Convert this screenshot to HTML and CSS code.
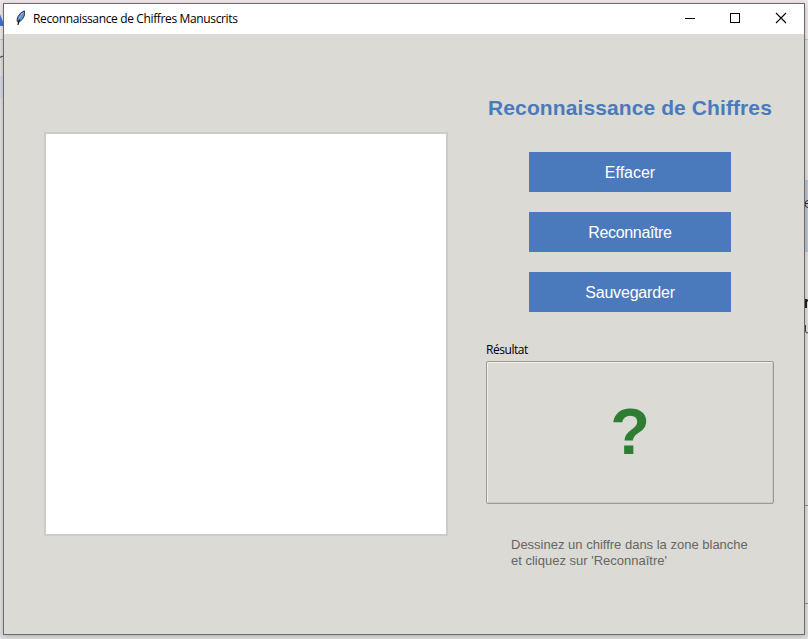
FILE: index.html
```html
<!DOCTYPE html>
<html lang="fr">
<head>
<meta charset="utf-8">
<title>Reconnaissance de Chiffres Manuscrits</title>
<link rel="stylesheet" href="styles.css">
</head>
<body>
<div class="backdrop" aria-hidden="true">
  <svg width="808" height="639" viewBox="0 0 808 639">
    <rect width="808" height="39" fill="#f0e8e8"/>
    <path d="M0 39.5h808" stroke="#c4c2c4"/>
    <path d="M0 14l3 8v4H0z" fill="#3f6fd0"/>
    <path d="M0 57.500q2-1.500 3-1" stroke="#555" stroke-width="1.300" fill="none"/>
    <rect y="76" width="3" height="22" fill="#d3d6e0"/>
    <rect x="805" y="180" width="3" height="72" fill="#bfc4d2"/>
    <path d="M805 505.500h3M805 603.500h3" stroke="#929292"/>
    <path d="M808 200.500q-3 0-3 3.500t3 3.500M805 203.500h3" stroke="#333" fill="none"/>
    <path d="M806 299v9M806 300.500h2" stroke="#222" stroke-width="2"/>
    <path d="M805.500 325v6q0 2 2.500 2" stroke="#444" fill="none"/>
  </svg>
</div>
<div class="window">
  <header class="titlebar">
    <svg class="feather" width="12" height="16" viewBox="0 0 12 16">
      <path d="M9.300.800Q5 2.500 3 6.500 1.700 9 2.200 11.500L4.300 12Q8 9.500 9.200 6 10 3.500 9.300.800z" fill="#5b94dc" stroke="#22262e" stroke-width=".9"/>
      <path d="M4.500 9.500Q3.300 12 3 15" fill="none" stroke="#111" stroke-width="1.200"/>
      <path d="M8 2.800Q5.200 5.500 4.200 8.500" fill="none" stroke="#8dbcf3" stroke-width=".9"/>
    </svg>
    <h1 class="caption">Reconnaissance de Chiffres Manuscrits</h1>
    <div class="controls">
      <svg width="46" height="30" viewBox="0 0 46 30"><path d="M19 14.500h10" stroke="#000"/></svg>
      <svg width="46" height="30" viewBox="0 0 46 30"><rect x="18.500" y="9.500" width="9" height="9" fill="none" stroke="#000"/></svg>
      <svg width="46" height="30" viewBox="0 0 46 30"><path d="M18 9l10 10M28 9L18 19" stroke="#000" stroke-width="1.100"/></svg>
    </div>
  </header>
  <main class="content">
    <div class="drawing"></div>
    <section class="panel">
      <h2 class="title">Reconnaissance de Chiffres</h2>
      <div class="actions">
        <button class="action">Effacer</button>
        <button class="action action-recognize">Reconnaître</button>
        <button class="action action-save">Sauvegarder</button>
      </div>
      <div class="result-label">Résultat</div>
      <div class="result"><span class="digit">?</span></div>
      <p class="hint">Dessinez un chiffre dans la zone blanche<br>et cliquez sur 'Reconnaître'</p>
    </section>
  </main>
</div>
</body>
</html>
```
FILE: styles.css
```css
* { box-sizing: border-box; }
body {
  margin: 0;
  padding: 3px;
  width: 808px;
  height: 639px;
  overflow: hidden;
  background: #dedede;
  font-family: "Liberation Sans", Arial, sans-serif;
}
.backdrop { position: absolute; top: 0; left: 0; width: 808px; height: 639px; }
.backdrop svg { display: block; }
.window {
  position: relative;
  width: 802px;
  height: 632px;
  border: 1px solid #6b6b6b;
  background: #dbdad5;
  box-shadow: 0 1px 5px rgba(0, 0, 0, .22);
}
.titlebar {
  display: flex;
  height: 30px;
  background: #fff;
}
.feather { margin: 6px 6px 0 11px; }
.caption {
  margin: 0;
  font: 400 12px/30px "Open Sans", "Noto Sans", sans-serif;
  letter-spacing: -.36px;
  color: #000;
  white-space: nowrap;
}
.controls { display: flex; margin-left: auto; }
.content {
  display: flex;
  gap: 38px;
  padding-left: 40px;
}
.drawing {
  width: 404px;
  height: 404px;
  margin-top: 98px;
  border: 2px solid #cccccc;
  background: #fff;
}
.panel { width: 288px; padding-top: 61px; }
.title {
  margin: 0;
  font-size: 21px;
  line-height: 26px;
  font-weight: 700;
  letter-spacing: .1px;
  color: #4a7abc;
  text-align: center;
  white-space: nowrap;
}
.actions {
  display: flex;
  flex-direction: column;
  align-items: center;
  gap: 20px;
  margin-top: 31px;
}
.action {
  width: 202px;
  height: 40px;
  padding: 2px 0 0;
  border: 0;
  background: #4a7abc;
  color: #fff;
  font: 400 16px/38px "Liberation Sans", Arial, sans-serif;
}
.action-recognize { letter-spacing: -.35px; }
.action-save { letter-spacing: -.18px; }
.result-label {
  margin-top: 30px;
  font: 400 12px/16px "Open Sans", "Noto Sans", sans-serif;
  letter-spacing: -.45px;
  color: #000;
}
.result {
  display: flex;
  align-items: center;
  justify-content: center;
  height: 143px;
  margin-top: 3px;
  border: 1px solid #9c9a94;
  border-radius: 2px;
  box-shadow: inset 1px 1px #efeeeb, inset -1px -1px #cbc9c3;
}
.digit {
  padding-bottom: 1px;
  font-size: 65px;
  line-height: 72px;
  font-weight: 700;
  color: #2e7d32;
}
.hint {
  margin: 33px 0 0 25px;
  font-size: 13px;
  line-height: 16px;
  color: #666;
  white-space: nowrap;
}
```
